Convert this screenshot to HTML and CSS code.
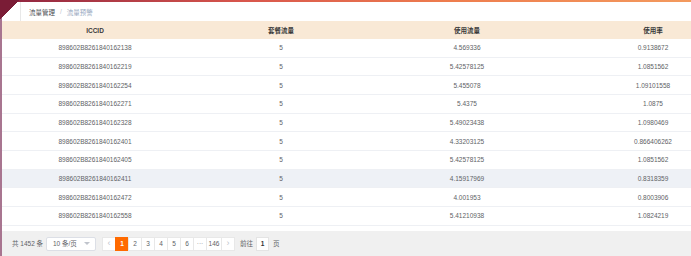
FILE: index.html
```html
<!DOCTYPE html>
<html lang="zh-CN">
<head>
<meta charset="utf-8">
<title>流量预警</title>
<link rel="stylesheet" href="styles.css">
</head>
<body>
<div class="app">
  <div class="corner"></div>
  <div class="stripe"></div>
  <div class="main">
    <div class="topbar"></div>
    <div class="breadcrumb">
      <div class="toggle"></div>
      <span class="crumb first">流量管理</span>
      <span class="sep">/</span>
      <span class="crumb last">流量预警</span>
    </div>
    <div class="table-wrap">
      <div class="table">
        <div class="row head">
          <div>ICCID</div><div>套餐流量</div><div>使用流量</div><div>使用率</div>
        </div>
        <div class="row"><div>898602B8261840162138</div><div>5</div><div>4.569336</div><div>0.9138672</div></div>
        <div class="row"><div>898602B8261840162219</div><div>5</div><div>5.42578125</div><div>1.0851562</div></div>
        <div class="row"><div>898602B8261840162254</div><div>5</div><div>5.455078</div><div>1.09101558</div></div>
        <div class="row"><div>898602B8261840162271</div><div>5</div><div>5.4375</div><div>1.0875</div></div>
        <div class="row"><div>898602B8261840162328</div><div>5</div><div>5.49023438</div><div>1.0980469</div></div>
        <div class="row"><div>898602B8261840162401</div><div>5</div><div>4.33203125</div><div>0.866406262</div></div>
        <div class="row"><div>898602B8261840162405</div><div>5</div><div>5.42578125</div><div>1.0851562</div></div>
        <div class="row hover"><div>898602B8261840162411</div><div>5</div><div>4.15917969</div><div>0.8318359</div></div>
        <div class="row"><div>898602B8261840162472</div><div>5</div><div>4.001953</div><div>0.8003906</div></div>
        <div class="row"><div>898602B8261840162558</div><div>5</div><div>5.41210938</div><div>1.0824219</div></div>
      </div>
    </div>
    <div class="gap"></div>
    <div class="footer">
      <span class="total">共 1452 条</span>
      <div class="select"><span>10 条/页</span><span class="caret"></span></div>
      <div class="pager">
        <span class="btn arrow">&#x2039;</span>
        <span class="btn active">1</span>
        <span class="btn">2</span>
        <span class="btn">3</span>
        <span class="btn">4</span>
        <span class="btn">5</span>
        <span class="btn">6</span>
        <span class="btn more">···</span>
        <span class="btn wide">146</span>
        <span class="btn arrow">&#x203A;</span>
      </div>
      <span class="goto">前往</span>
      <span class="input">1</span>
      <span class="page-label">页</span>
    </div>
  </div>
</div>
</body>
</html>
```
FILE: styles.css
```css
* { box-sizing: border-box; }
html, body { margin: 0; padding: 0; }
body {
  width: 691px;
  height: 256px;
  overflow: hidden;
  background: #fff;
  font-family: "Liberation Sans", "Noto Sans CJK SC", sans-serif;
  font-size: 6.5px;
  color: #606266;
}
.app {
  position: relative;
  display: flex;
  height: 256px;
}
.corner {
  position: absolute;
  left: 0;
  top: 0;
  width: 19px;
  height: 19px;
  background: linear-gradient(135deg, #7a1c36 50%, transparent 50%);
  z-index: 2;
}
.stripe {
  width: 2px;
  background: #a87590;
  flex: none;
}
.main {
  flex: 1;
  min-width: 0;
  display: flex;
  flex-direction: column;
  overflow: hidden;
}
.topbar {
  height: 2px;
  background: linear-gradient(90deg, #8e2440 0%, #d8564c 35%, #ee7d4e 65%, #f39a5e 100%);
  flex: none;
}
.breadcrumb {
  height: 19px;
  display: flex;
  align-items: center;
  flex: none;
}
.toggle {
  width: 19px;
  height: 19px;
  border-right: 1px solid #e8e8e8;
  margin-right: 8px;
}
.crumb.first { color: #4a4d52; }
.sep { color: #c0c4cc; margin: 0 5px; }
.crumb.last { color: #97a8be; }
.table-wrap {
  overflow: hidden;
  flex: none;
}
.table {
  width: 744px;
}
.row {
  display: grid;
  grid-template-columns: repeat(4, 186px);
  height: 18.67px;
  align-items: center;
  text-align: center;
  border-bottom: 1px solid #eef0f4;
  background: #fff;
}
.row.head {
  height: 18px;
  background: #f9e9d6;
  color: #3a3a3a;
  font-weight: bold;
  border-bottom: none;
}
.row.hover { background: #eef1f6; }
.gap { height: 5px; flex: none; }
.footer {
  flex: 1;
  background: #f0f0f0;
  display: flex;
  align-items: flex-start;
  padding: 6px 0 0 10px;
  color: #606266;
}
.footer > * { height: 14px; line-height: 14px; }
.total { width: 34px; }
.select {
  width: 50px;
  background: #fff;
  border: 1px solid #dcdfe6;
  border-radius: 2px;
  display: flex;
  align-items: center;
  justify-content: space-between;
  padding: 0 5px 0 6px;
  line-height: 12px;
}
.caret {
  width: 0;
  height: 0;
  border-left: 3px solid transparent;
  border-right: 3px solid transparent;
  border-top: 3px solid #c0c4cc;
}
.pager {
  display: flex;
  margin-left: 6px;
}
.btn {
  width: 14px;
  height: 14px;
  line-height: 12px;
  text-align: center;
  background: #fff;
  border: 1px solid #e8e8e8;
  margin-left: -1px;
  color: #606266;
}
.btn:first-child { margin-left: 0; }
.btn.active {
  background: #ff6a00;
  border-color: #ff6a00;
  color: #fff;
  font-weight: bold;
}
.btn.wide { width: 16px; }
.btn.arrow { color: #c0c4cc; font-size: 9px; line-height: 11px; }
.btn.more { color: #909399; }
.goto { margin-left: 5px; width: 16px; }
.input {
  width: 13px;
  margin-left: 0;
  background: #fff;
  border: 1px solid #e4e4e4;
  text-align: center;
  line-height: 12px;
  color: #303133;
  font-weight: bold;
}
.page-label { margin-left: 4px; }
```
